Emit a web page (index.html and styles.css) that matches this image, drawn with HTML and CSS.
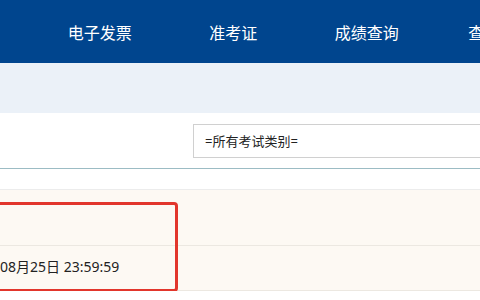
FILE: index.html
```html
<!DOCTYPE html>
<html lang="zh-CN">
<head>
    <meta charset="UTF-8">
    <title>考试报名</title>
    <link rel="stylesheet" href="styles.css">
</head>
<body>
    <div class="nav">
        <a class="nav-item">电子发票</a>
        <a class="nav-item">准考证</a>
        <a class="nav-item">成绩查询</a>
        <a class="nav-item">查询服务</a>
    </div>

    <div class="band"></div>

    <div class="toolbar">
        <div class="select-box">=所有考试类别=</div>
    </div>

    <div class="table-head"></div>

    <div class="table">
        <div class="row"></div>
        <div class="row">
            <span class="time">08月25日 23:59:59</span>
        </div>
        <!-- highlight annotation -->
        <div class="mark"></div>
    </div>
</body>
</html>
```

FILE: styles.css
```css
body {
    margin: 0;
    font-family: "Noto Sans", "Noto Sans CJK SC", sans-serif;
    color: #333;
    background: #fff;
    overflow: hidden;
}

.nav {
    height: 63px;
    background-color: #00458e;
    display: flex;
    align-items: center;
    padding-left: 33px;
    white-space: nowrap;
}

.nav-item {
    flex: 0 0 133.5px;
    text-align: center;
    color: #fff;
    font-size: 16px;
    font-family: "Noto Sans CJK SC", sans-serif;
}

.band {
    height: 50px;
    background-color: #ebf1f8;
}

.toolbar {
    height: 55px;
    display: flex;
    align-items: center;
    padding-left: 193px;
    border-bottom: 1px solid #9cbcc4;
    white-space: nowrap;
}

.select-box {
    flex: 0 0 320px;
    height: 32px;
    line-height: 32px;
    border: 1px solid #d0d0d0;
    padding-left: 11px;
    font-size: 13px;
    color: #222;
}

.table-head {
    height: 20px;
    border-bottom: 1px solid #ececec;
}

.table {
    position: relative;
    background-color: #fdf9f3;
}

.row {
    height: 55px;
    border-bottom: 1px solid #ece8e1;
    display: flex;
    align-items: center;
}

.row + .row {
    height: 40px;
    padding-bottom: 4px;
}

.time {
    font-size: 14px;
    color: #222;
    white-space: nowrap;
}

.mark {
    position: absolute;
    left: -10px;
    top: 12px;
    width: 182px;
    height: 84px;
    border: 3px solid #e2362c;
    border-radius: 4px;
}
```
